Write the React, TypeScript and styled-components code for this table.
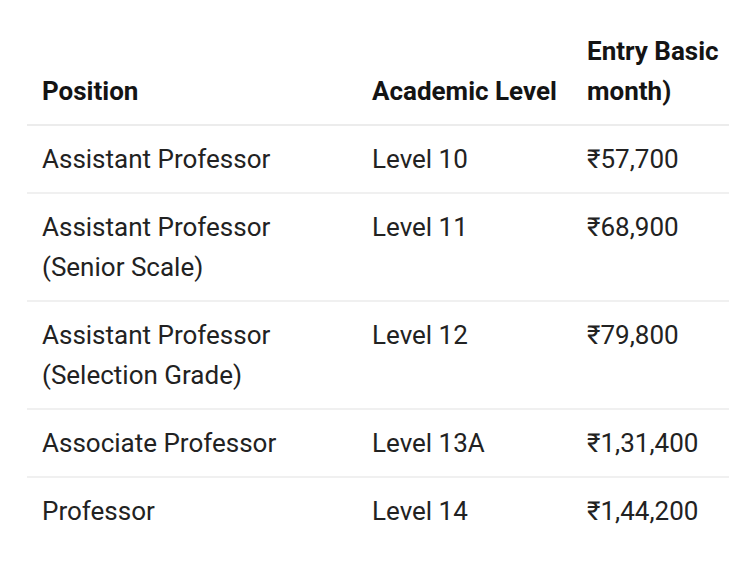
import React from "react";
import styled, { createGlobalStyle } from "styled-components";

type Row = {
  position: string[];
  level: string;
  pay: string;
};

const rows: Row[] = [
  { position: ["Assistant Professor"], level: "Level 10", pay: "₹57,700" },
  {
    position: ["Assistant Professor", "(Senior Scale)"],
    level: "Level 11",
    pay: "₹68,900",
  },
  {
    position: ["Assistant Professor", "(Selection Grade)"],
    level: "Level 12",
    pay: "₹79,800",
  },
  { position: ["Associate Professor"], level: "Level 13A", pay: "₹1,31,400" },
  { position: ["Professor"], level: "Level 14", pay: "₹1,44,200" },
];

const App: React.FC = () => {
  return (
    <>
      <GlobalStyle />
      <Page>
        <PayTable>
          <thead>
            <tr>
              <HeadCell $width={330}>Position</HeadCell>
              <HeadCell $width={215}>Academic Level</HeadCell>
              <HeadCell $width={157}>
                Entry Basic
                <br />
                month)
              </HeadCell>
            </tr>
          </thead>
          <tbody>
            {rows.map((row) => (
              <BodyRow key={row.position.join(" ")}>
                <Cell>
                  {row.position.map((line, i) => (
                    <Line key={i}>{line}</Line>
                  ))}
                </Cell>
                <Cell>{row.level}</Cell>
                <Cell>{row.pay}</Cell>
              </BodyRow>
            ))}
          </tbody>
        </PayTable>
      </Page>
    </>
  );
};

const GlobalStyle = createGlobalStyle`
  html, body {
    margin: 0;
    padding: 0;
    background: #ffffff;
  }
  body {
    font-family: Roboto, "Noto Sans", Arial, sans-serif;
    -webkit-font-smoothing: antialiased;
  }
`;

const Page = styled.div`
  width: 756px;
  height: 571px;
  padding: 18px 0 0 27px;
  box-sizing: border-box;
  overflow: hidden;
  background: #ffffff;
`;

const PayTable = styled.table`
  width: 702px;
  table-layout: fixed;
  border-collapse: collapse;
  font-size: 26px;
  line-height: 40px;
`;

const HeadCell = styled.th<{ $width: number }>`
  box-sizing: border-box;
  width: ${(p) => p.$width}px;
  padding: 13px 0 13px 15px;
  text-align: left;
  vertical-align: bottom;
  font-weight: 700;
  color: #141414;
  white-space: nowrap;
  border-bottom: 2px solid #ececec;
`;

const BodyRow = styled.tr`
  border-bottom: 2px solid #f0f0f0;
  &:last-child {
    border-bottom: none;
  }
`;

const Cell = styled.td`
  box-sizing: border-box;
  padding: 13px 0 13px 15px;
  vertical-align: top;
  font-weight: 400;
  color: #222222;
  white-space: nowrap;
`;

const Line = styled.span`
  display: block;
`;

export default App;
